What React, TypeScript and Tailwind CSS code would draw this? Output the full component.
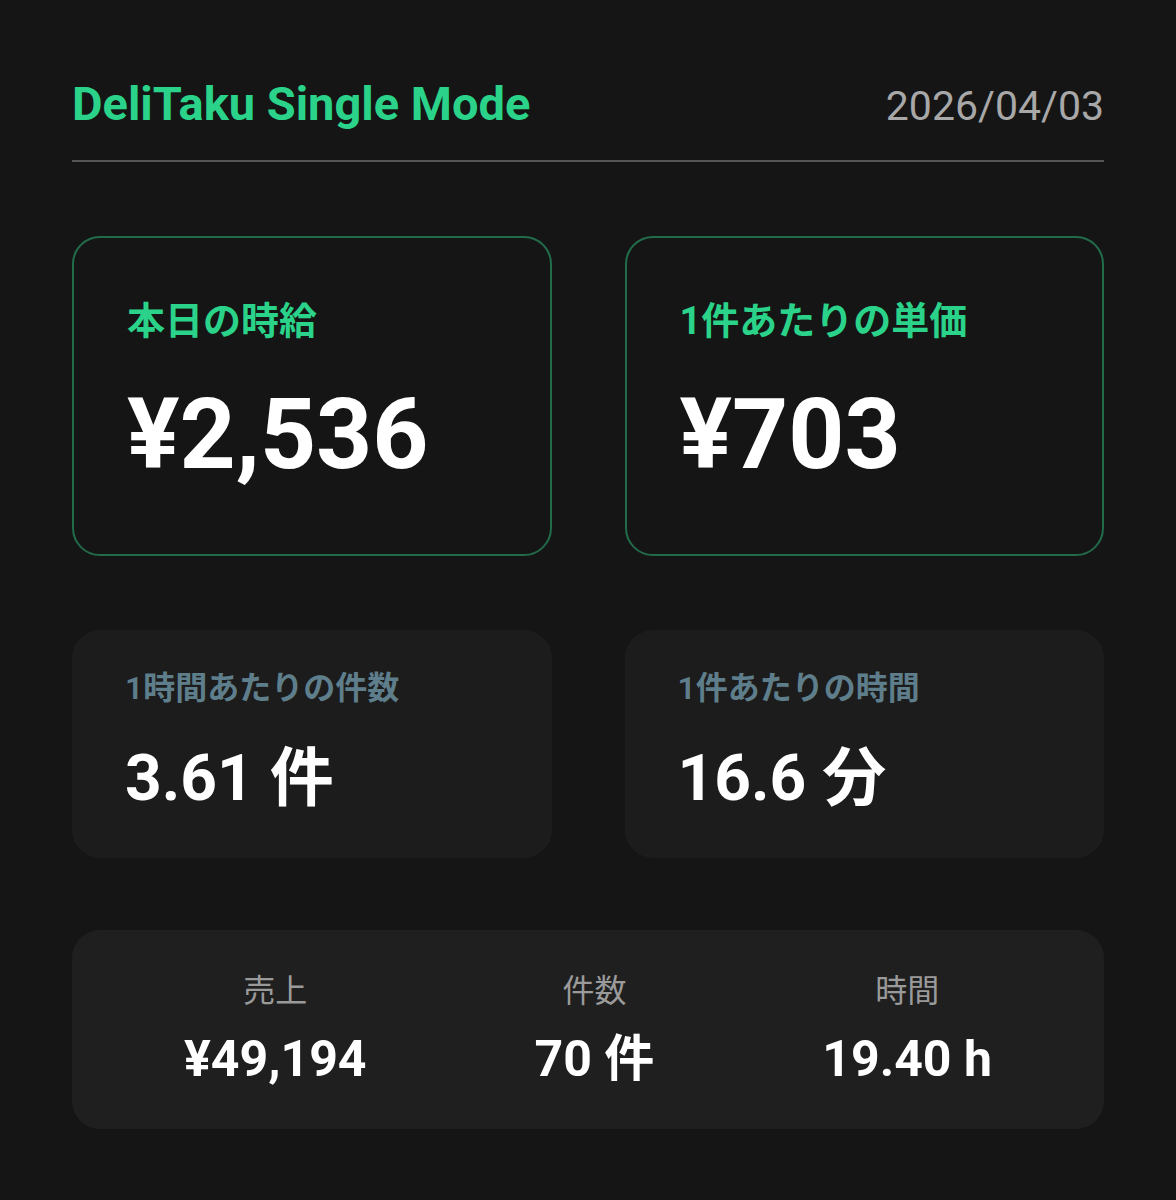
import React from "react";

const font = { fontFamily: 'Roboto, "Noto Sans CJK JP", sans-serif' };

function BigCard({ label, value }: { label: string; value: string }) {
  return (
    <div className="h-[320px] rounded-[28px] border-2 border-[#226b49] pl-[53px] pt-[64px]">
      <div className="text-[38px] font-bold leading-none text-[#2ad389]">{label}</div>
      <div className="mt-[46px] text-[98px] font-bold leading-none text-white">{value}</div>
    </div>
  );
}

function MidCard({ label, value }: { label: string; value: string }) {
  return (
    <div className="h-[228px] rounded-[28px] bg-[#1c1c1c] pl-[53px] pt-[42px]">
      <div className="text-[32px] font-semibold leading-none text-[#5f7e8b]">{label}</div>
      <div className="mt-[43px] text-[64px] font-bold leading-none text-white">{value}</div>
    </div>
  );
}

function Stat({ label, value }: { label: string; value: string }) {
  return (
    <div className="flex flex-col items-center">
      <div className="text-[32px] leading-none text-[#9a9a9a]">{label}</div>
      <div className="mt-[27px] text-[50px] font-bold leading-none text-white">{value}</div>
    </div>
  );
}

export default function App() {
  return (
    <div className="min-h-[1200px] w-full bg-[#151515] px-[72px] pt-[80px]" style={font}>
      <div className="flex items-baseline justify-between border-b-2 border-[#555555] pb-[33px]">
        <div className="text-[47px] font-bold leading-none text-[#2ad389]">DeliTaku Single Mode</div>
        <div className="text-[41px] leading-none text-[#a8a8a8]">2026/04/03</div>
      </div>

      <div className="mt-[74px] grid grid-cols-2 gap-x-[73px]">
        <BigCard label="本日の時給" value="¥2,536" />
        <BigCard label="1件あたりの単価" value="¥703" />
      </div>

      <div className="mt-[74px] grid grid-cols-2 gap-x-[73px]">
        <MidCard label="1時間あたりの件数" value="3.61 件" />
        <MidCard label="1件あたりの時間" value="16.6 分" />
      </div>

      <div className="mt-[72px] flex h-[199px] items-center justify-around rounded-[28px] bg-[#1f1f1f] px-[28px]">
        <Stat label="売上" value="¥49,194" />
        <Stat label="件数" value="70 件" />
        <Stat label="時間" value="19.40 h" />
      </div>
    </div>
  );
}
